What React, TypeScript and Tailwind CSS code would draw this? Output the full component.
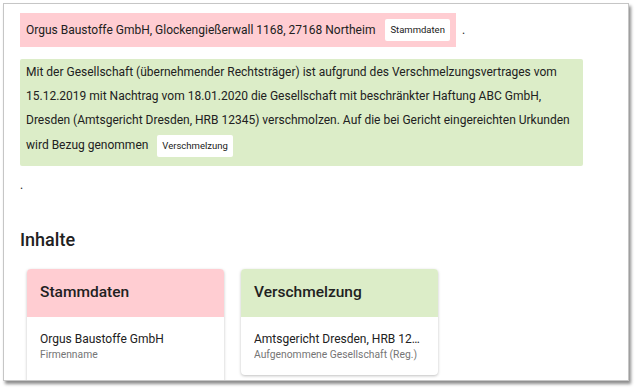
import React from "react";

interface Eintrag {
  wert: string;
  label: string;
}

interface KarteProps {
  titel: string;
  farbe: string;
  eintraege: Eintrag[];
  hoch?: boolean;
}

function Badge({ children }: { children: React.ReactNode }) {
  return (
    <span className="inline-block align-middle h-[22px] leading-[22px] px-[5px] bg-white rounded-[2px] text-[9.5px] text-[#212121] ml-[6px] my-[3px]">
      {children}
    </span>
  );
}

function Karte({ titel, farbe, eintraege, hoch }: KarteProps) {
  return (
    <div className="w-[197px] bg-white rounded-[4px] shadow-[0_1px_3px_rgba(0,0,0,0.25)] overflow-hidden self-start">
      <div className={`${farbe} h-[48px] px-[13px] flex items-center`}>
        <h3 className="text-[15.5px] font-medium text-[#212121]">{titel}</h3>
      </div>
      <div className={`pl-[13px] pr-[12px] pt-[13px] flex flex-col gap-[24px] ${hoch ? "pb-[40px]" : "pb-[13px]"}`}>
        {eintraege.map((e) => (
          <div key={e.label}>
            <p className="text-[12px] leading-[18px] text-[#212121] truncate pr-[6px]">{e.wert}</p>
            <p className="text-[10.3px] leading-[14px] text-[#757575] whitespace-nowrap overflow-hidden">{e.label}</p>
          </div>
        ))}
      </div>
    </div>
  );
}

export default function App() {
  return (
    <div className="w-[638px] h-[390px] bg-white pt-[3px] pl-[3px] font-['Roboto',sans-serif]">
      <div className="w-[626px] h-[378px] border border-[#c6c6c6] shadow-[2px_3px_3px_rgba(0,0,0,0.45)] overflow-hidden px-[16px] pt-[9px] text-[#212121]">
        <div className="text-[12px]">
          <span className="inline-flex items-center p-[6px] bg-[#ffcdd2]">
            Orgus Baustoffe GmbH, Glockengießerwall 1168, 27168 Northeim
            <span className="ml-[10px] h-[22px] leading-[22px] px-[5px] bg-white rounded-[2px] text-[9.5px]">
              Stammdaten
            </span>
          </span>
          <span className="ml-[6px]">.</span>
        </div>

        <div className="mt-[12px] w-[563px] bg-[#dcedc8] px-[6px] pt-px pb-[6px] text-[12px] leading-[24px] rounded-[2px]">
          Mit der Gesellschaft (übernehmender Rechtsträger) ist aufgrund des Verschmelzungsvertrages vom
          15.12.2019 mit Nachtrag vom 18.01.2020 die Gesellschaft mit beschränkter Haftung ABC GmbH,
          Dresden (Amtsgericht Dresden, HRB 12345) verschmolzen. Auf die bei Gericht eingereichten Urkunden
          wird Bezug genommen <Badge>Verschmelzung</Badge>
        </div>

        <p className="text-[12px] leading-[24px] mt-[7px]">.</p>

        <h2 className="text-[18px] font-medium leading-[28px] mt-[29px]">Inhalte</h2>

        <div className="flex gap-[17px] mt-[15px] pl-[7px]">
          <Karte
            titel="Stammdaten"
            farbe="bg-[#ffcdd2]"
            hoch
            eintraege={[{ wert: "Orgus Baustoffe GmbH", label: "Firmenname" }]}
          />
          <Karte
            titel="Verschmelzung"
            farbe="bg-[#dcedc8]"
            eintraege={[
              { wert: "Amtsgericht Dresden, HRB 12345", label: "Aufgenommene Gesellschaft (Reg.)" },
            ]}
          />
        </div>
      </div>
    </div>
  );
}
